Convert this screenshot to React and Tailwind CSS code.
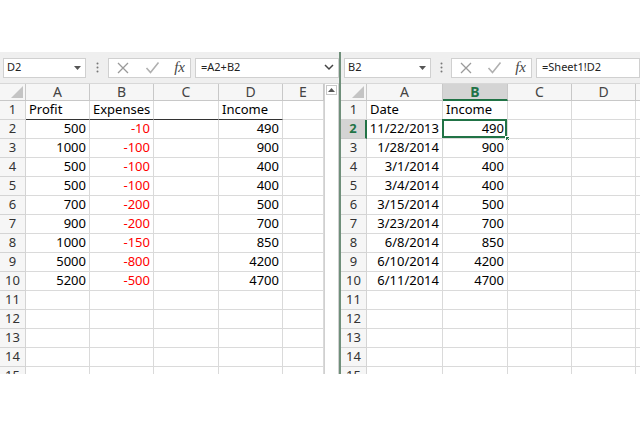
import React from 'react';

const leftCols = [
  { k: 'A', w: 64 },
  { k: 'B', w: 64 },
  { k: 'C', w: 65 },
  { k: 'D', w: 64 },
  { k: 'E', w: 41 },
];

const rightCols = [
  { k: 'A', w: 76 },
  { k: 'B', w: 65 },
  { k: 'C', w: 64 },
  { k: 'D', w: 64 },
  { k: '', w: 64 },
];

const profit = [500, 1000, 500, 500, 700, 900, 1000, 5000, 5200];
const expenses = [-10, -100, -100, -100, -200, -200, -150, -800, -500];
const income = [490, 900, 400, 400, 500, 700, 850, 4200, 4700];
const dates = ['11/22/2013', '1/28/2014', '3/1/2014', '3/4/2014', '3/15/2014', '3/23/2014', '6/8/2014', '6/10/2014', '6/11/2014'];

// left sheet: [value, align, color]
const leftData = [
  [['Profit', 'l'], ['Expenses', 'l'], null, ['Income', 'l'], null],
  ...profit.map((p, i) => [[p, 'r'], [expenses[i], 'r', 'red'], null, [income[i], 'r'], null]),
];

const rightData = [
  [['Date', 'l'], ['Income', 'l'], null, null, null],
  ...dates.map((d, i) => [[d, 'r'], [income[i], 'r'], null, null, null]),
];

const DropTri = () => (
  <svg width="7" height="4" viewBox="0 0 7 4" className="shrink-0">
    <path d="M0 0h7L3.5 4z" fill="#555" />
  </svg>
);

const Dots = () => (
  <svg width="3" height="11" viewBox="0 0 3 11" className="shrink-0">
    <circle cx="1.5" cy="1.5" r="1" fill="#777" />
    <circle cx="1.5" cy="5.5" r="1" fill="#777" />
    <circle cx="1.5" cy="9.5" r="1" fill="#777" />
  </svg>
);

const FormulaButtons = ({ w }) => (
  <div className={`flex h-[20px] items-center justify-between border border-[#d0d0d0] bg-white pl-[7px] pr-[5px] ${w}`}>
    <svg width="14" height="14" viewBox="0 0 14 14">
      <path d="M2 2l10 10M12 2L2 12" stroke="#9a9a9a" strokeWidth="1.3" fill="none" />
    </svg>
    <svg width="15" height="13" viewBox="0 0 15 13">
      <path d="M1.5 7l4 4.5L13.5 1.5" stroke="#b0b0b0" strokeWidth="1.6" fill="none" />
    </svg>
    <span className="font-['Liberation_Serif',serif] text-[15px] italic leading-none text-[#444]">fx</span>
  </div>
);

function FormulaBar({ name, nameW, btnW, formula, showChevron, gap }) {
  return (
    <div className="flex h-[31px] shrink-0 items-center bg-[#efefef] pl-[3px]">
      <div className={`flex h-[20px] items-center justify-between border border-[#d0d0d0] bg-white pl-[3px] pr-[4px] ${nameW}`}>
        <span className="text-[11px] text-[#222]">{name}</span>
        <DropTri />
      </div>
      <div className={`flex justify-center ${gap}`}>
        <Dots />
      </div>
      <FormulaButtons w={btnW} />
      <div className="ml-[4px] flex h-[20px] min-w-0 flex-1 items-center justify-between border border-[#d0d0d0] bg-white pl-[5px] pr-[4px]">
        <span className="whitespace-nowrap text-[11px] text-[#222]">{formula}</span>
        {showChevron && (
          <svg width="10" height="7" viewBox="0 0 10 7">
            <path d="M1 1l4 4 4-4" stroke="#444" strokeWidth="1.5" fill="none" />
          </svg>
        )}
      </div>
    </div>
  );
}

const Corner = () => (
  <div className="relative h-full w-[26px] shrink-0 border-b border-r border-[#c8c8c8] bg-[#f6f6f6]">
    <svg width="12" height="12" viewBox="0 0 12 12" className="absolute bottom-[2px] right-[2px]">
      <path d="M12 0v12H0z" fill="#c4c4c4" />
    </svg>
  </div>
);

function Sheet({ cols, data, selCol, selRow, headerBorderRow1 }) {
  const rows = Array.from({ length: 15 }, (_, i) => i + 1);
  return (
    <div className="flex shrink-0 flex-col">
      <div className="flex h-[18px] shrink-0 border-t border-[#d8d8d8]">
        <Corner />
        {cols.map((c, ci) => {
          const sel = ci === selCol;
          return (
            <div
              key={ci}
              style={{ width: c.w }}
              className={`flex shrink-0 items-center justify-center border-r text-[14px] leading-none ${
                sel
                  ? 'border-b-2 border-b-[#217346] border-r-[#c8c8c8] bg-[#d4d4d4] font-bold text-[#217346]'
                  : 'border-b border-[#c8c8c8] bg-[#f6f6f6] text-[#444]'
              }`}
            >
              {c.k}
            </div>
          );
        })}
      </div>
      {rows.map((r) => {
        const rowData = data[r - 1] || [];
        const selR = r === selRow;
        return (
          <div key={r} className="flex h-[19px] shrink-0">
            <div
              className={`flex w-[26px] shrink-0 items-center justify-center border-b border-r text-[13px] ${
                selR
                  ? 'border-b-[#c8c8c8] border-r-2 border-r-[#217346] bg-[#d4d4d4] font-bold text-[#217346]'
                  : 'border-[#d4d4d4] bg-[#f6f6f6] text-[#333]'
              }`}
            >
              {r}
            </div>
            {cols.map((c, ci) => {
              const cell = rowData[ci];
              const darkBottom = headerBorderRow1 && r === 1 && ci < 4;
              const isSel = selR && ci === selCol;
              return (
                <div
                  key={ci}
                  style={{ width: c.w }}
                  className={`relative flex shrink-0 items-center border-r px-[3px] text-[13px] text-black ${
                    darkBottom ? 'border-b border-b-[#333] border-r-[#dadada]' : 'border-b border-[#dadada]'
                  } ${cell && cell[1] === 'r' ? 'justify-end' : 'justify-start'}`}
                >
                  {cell && <span className={cell[2] === 'red' ? 'text-[#ff0000]' : ''}>{cell[0]}</span>}
                  {isSel && (
                    <>
                      <div className="pointer-events-none absolute -left-[1px] -top-[1px] bottom-0 right-0 border-2 border-[#217346]" />
                      <div className="absolute -bottom-[3px] -right-[3px] h-[5px] w-[5px] border border-white bg-[#217346]" />
                    </>
                  )}
                </div>
              );
            })}
          </div>
        );
      })}
    </div>
  );
}

export default function App() {
  return (
    <div className="flex h-[426px] w-[640px] flex-col overflow-hidden bg-white font-['Noto_Sans',sans-serif]">
      <div className="h-[52px] shrink-0" />
      <div className="flex h-[322px] shrink-0 overflow-hidden">
        {/* left window */}
        <div className="flex w-[339px] shrink-0 flex-col overflow-hidden">
          <FormulaBar name="D2" nameW="w-[83px]" btnW="w-[83px]" formula="=A2+B2" showChevron gap="w-[22px]" />
          <div className="flex shrink-0">
            <Sheet cols={leftCols} data={leftData} headerBorderRow1 />
            <div className="flex w-[15px] shrink-0 flex-col border-l border-r border-t border-[#d0d0d0] border-t-[#d8d8d8] bg-white">
              <div className="mx-auto mt-[1px] flex h-[10px] w-[11px] items-center justify-center border border-[#c8c8c8] bg-white">
                <svg width="7" height="4" viewBox="0 0 7 4">
                  <path d="M0 4h7L3.5 0z" fill="#555" />
                </svg>
              </div>
            </div>
          </div>
        </div>
        {/* splitter */}
        <div className="w-[2px] shrink-0 bg-[#6f8f7a]" />
        {/* right window */}
        <div className="flex min-w-0 flex-1 flex-col overflow-hidden">
          <FormulaBar name="B2" nameW="w-[87px]" btnW="w-[81px]" formula="=Sheet1!D2" gap="w-[20px]" />
          <Sheet cols={rightCols} data={rightData} selCol={1} selRow={2} />
        </div>
      </div>
    </div>
  );
}
